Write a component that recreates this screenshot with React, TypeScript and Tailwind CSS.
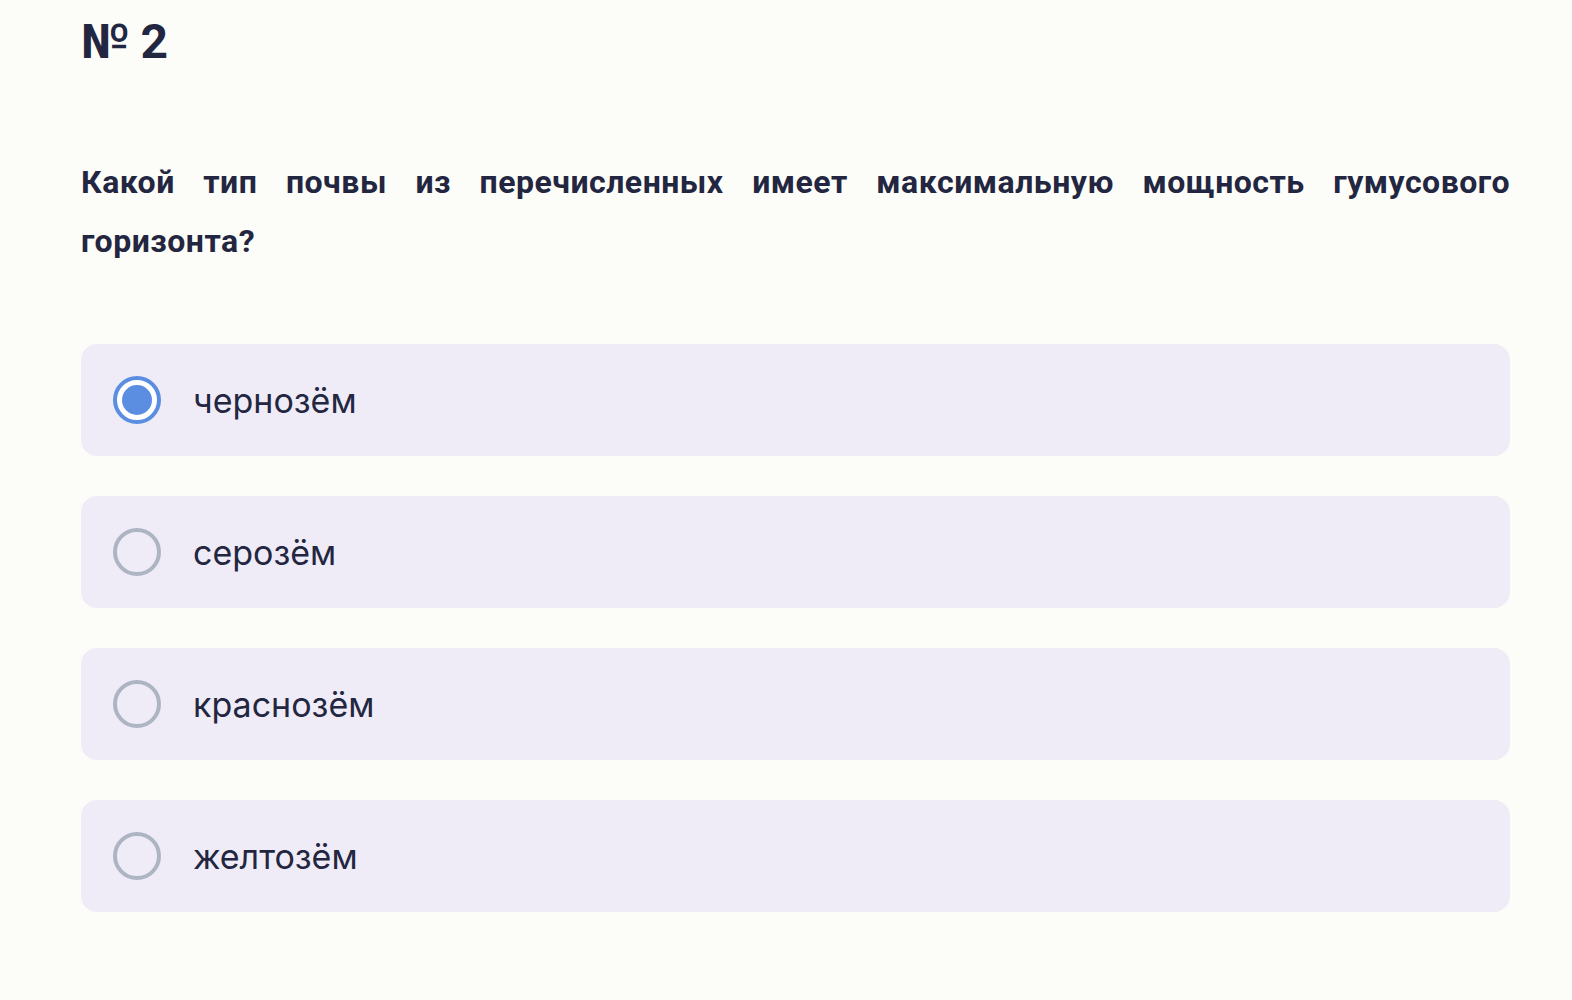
import React from "react";

const options = [
  { label: "чернозём", checked: true },
  { label: "серозём", checked: false },
  { label: "краснозём", checked: false },
  { label: "желтозём", checked: false },
];

function Radio({ checked }: { checked: boolean }) {
  if (checked) {
    return (
      <div className="w-[48px] h-[48px] rounded-full border-[4px] border-[#5b8ee0] bg-white flex items-center justify-center shrink-0">
        <div className="w-[30px] h-[30px] rounded-full bg-[#5b8ee0]" />
      </div>
    );
  }
  return <div className="w-[48px] h-[48px] rounded-full border-[4px] border-[#aeb5c2] shrink-0" />;
}

export default function App() {
  return (
    <div className="min-h-[1000px] w-full bg-[#fcfcf8] text-[#232640]">
      <div className="ml-[81px] w-[1429px] pt-[14px]">
        <h1 className="text-[48px] leading-[56px] font-bold font-['Roboto',sans-serif] tracking-[-0.5px]">№ 2</h1>
        <p className="mt-[83px] text-[32px] leading-[59px] font-bold font-['Roboto',sans-serif] text-justify tracking-[0.5px]">
          Какой тип почвы из перечисленных имеет максимальную мощность гумусового горизонта?
        </p>
        <div className="mt-[73px] flex flex-col gap-[40px]">
          {options.map((o) => (
            <div key={o.label} className="h-[112px] rounded-[16px] bg-[#efecf8] flex items-center pl-[32px] gap-[32px]">
              <Radio checked={o.checked} />
              <span className="text-[34px] font-['Inter',sans-serif] font-normal">{o.label}</span>
            </div>
          ))}
        </div>
      </div>
    </div>
  );
}
